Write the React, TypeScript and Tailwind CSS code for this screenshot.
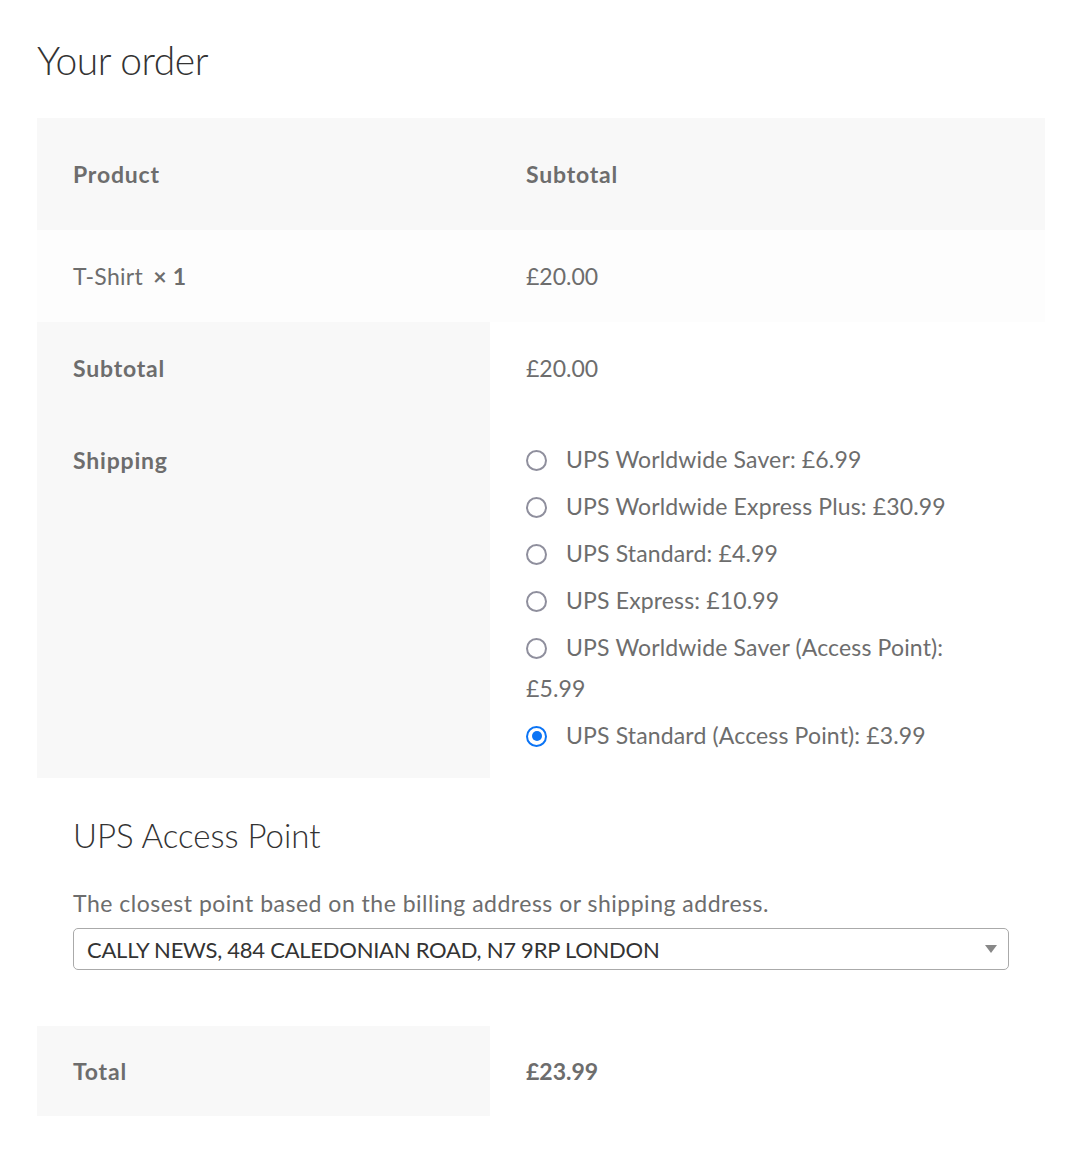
import React from "react";

const font = { fontFamily: "Lato, 'Liberation Sans', sans-serif" };

const options = [
  { label: "UPS Worldwide Saver: £6.99", checked: false },
  { label: "UPS Worldwide Express Plus: £30.99", checked: false },
  { label: "UPS Standard: £4.99", checked: false },
  { label: "UPS Express: £10.99", checked: false },
  { label: "UPS Worldwide Saver (Access Point): £5.99", checked: false },
  { label: "UPS Standard (Access Point): £3.99", checked: true },
];

function Radio({ checked }: { checked: boolean }) {
  return checked ? (
    <span className="inline-block align-middle w-[21px] h-[21px] rounded-full border-[2px] border-[#0b74f5] bg-white relative top-[-2px] mr-[19px]">
      <span className="absolute left-[3.5px] top-[3.5px] w-[10px] h-[10px] rounded-full bg-[#0b74f5]" />
    </span>
  ) : (
    <span className="inline-block align-middle w-[21px] h-[21px] rounded-full border-[2.5px] border-[#8f8f9d] bg-white relative top-[-2px] mr-[19px]" />
  );
}

export default function App() {
  return (
    <div className="bg-white w-[1082px] min-h-[1160px] pl-[37px] pt-[35px]" style={font}>
      <h3 className="text-[39px] leading-[50px] font-light text-[#333333] tracking-[-0.5px]">Your order</h3>
      <div className="mt-[33px] w-[1008px] text-[23px] tracking-[0.3px] text-[#6d6d6d]">
        <div className="grid grid-cols-[453px_555px] h-[112px] bg-[#f8f8f8] font-bold tracking-[0.8px]">
          <div className="flex items-center px-[36px]">Product</div>
          <div className="flex items-center px-[36px]">Subtotal</div>
        </div>
        <div className="grid grid-cols-[453px_555px] h-[92px] bg-[#fdfdfd]">
          <div className="flex items-center px-[36px]">
            T-Shirt&nbsp;<strong className="font-bold ml-[4px]">× 1</strong>
          </div>
          <div className="flex items-center px-[36px] tracking-normal">£20.00</div>
        </div>
        <div className="grid grid-cols-[453px_555px] h-[92px]">
          <div className="flex items-center px-[36px] bg-[#f8f8f8] font-bold tracking-[0.8px]">Subtotal</div>
          <div className="flex items-center px-[36px] tracking-normal">£20.00</div>
        </div>
        <div className="grid grid-cols-[453px_555px]">
          <div className="px-[36px] pt-[28px] bg-[#f8f8f8] font-bold leading-[36px] tracking-[0.8px]">Shipping</div>
          <div className="pl-[36px] pr-[40px] pt-[25px] pb-[22px]">
            <ul className="flex flex-col gap-[6px] leading-[41px] tracking-[0.15px]">
              {options.map((o) => (
                <li key={o.label}>
                  <Radio checked={o.checked} />
                  {o.label}
                </li>
              ))}
            </ul>
          </div>
        </div>
        <div className="px-[36px]">
          <h3 className="mt-[37px] text-[33px] leading-[40px] font-light tracking-normal text-[#333333]">UPS Access Point</h3>
          <p className="mt-[33px] leading-[30px] tracking-[0.5px]">The closest point based on the billing address or shipping address.</p>
          <div className="mt-[10px] h-[42px] w-[936px] rounded-[5px] border border-[#aaaaaa] flex items-center justify-between pl-[13px] pr-[10px] text-[#333333] text-[22px] tracking-[-0.25px]">
            <span>CALLY NEWS, 484 CALEDONIAN ROAD, N7 9RP LONDON</span>
            <svg width="12" height="8" viewBox="0 0 12 8" className="mr-[1px]">
              <path d="M0 0 L12 0 L6 8 Z" fill="#888888" />
            </svg>
          </div>
        </div>
        <div className="mt-[56px] grid grid-cols-[453px_555px] h-[90px] font-bold">
          <div className="flex items-center px-[36px] bg-[#f8f8f8] tracking-[0.8px]">Total</div>
          <div className="flex items-center px-[36px] tracking-normal">£23.99</div>
        </div>
      </div>
    </div>
  );
}
